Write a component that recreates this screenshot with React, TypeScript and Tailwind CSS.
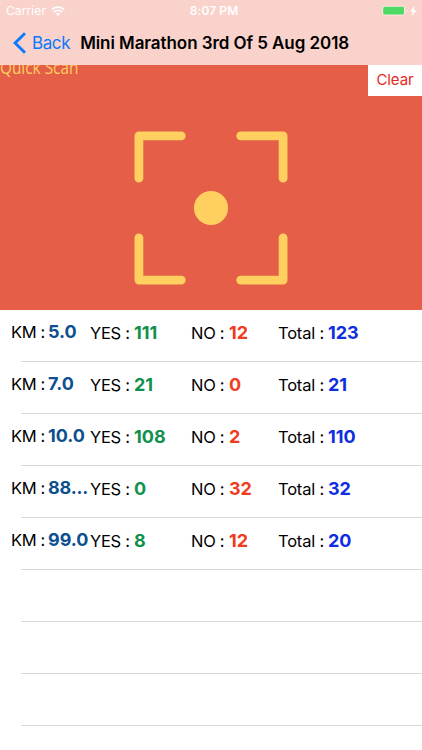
import { clsx } from "clsx";

interface Split {
  km: string;
  yes: number;
  no: number;
  total: number;
}

const SPLITS: Split[] = [
  { km: "5.0", yes: 111, no: 12, total: 123 },
  { km: "7.0", yes: 21, no: 0, total: 21 },
  { km: "10.0", yes: 108, no: 2, total: 110 },
  { km: "88...", yes: 0, no: 32, total: 32 },
  { km: "99.0", yes: 8, no: 12, total: 20 },
];

// The table keeps drawing separators below the last split
const EMPTY_ROWS = 3;

function WifiIcon() {
  return (
    <svg width="14" height="10" viewBox="0 0 14 10" fill="none" stroke="white">
      <path d="M0.8 3.7a8.8 8.8 0 0 1 12.4 0" strokeWidth="1.9" />
      <path d="M3 6.1a5.7 5.7 0 0 1 8 0" strokeWidth="1.8" />
      <path d="M7 9.9 4.9 7.8a3 3 0 0 1 4.2 0Z" fill="white" stroke="none" />
    </svg>
  );
}

function BatteryIcon() {
  return (
    <svg width="37" height="12" viewBox="0 0 37 12">
      <rect x="0.2" y="0.8" width="22.8" height="9.8" rx="1.8" fill="#fbe9df" />
      <rect x="1.2" y="1.8" width="20.8" height="7.8" rx="1.1" fill="#4cd964" />
      <path d="M24.4 4.3c1.5.5 1.5 2.7 0 3.2Z" fill="#fbe9df" />
      <path d="M32.4 0.8 28.2 6.6h2.7l-1.2 4.6 5-6h-2.9Z" fill="white" />
    </svg>
  );
}

function StatusBar() {
  return (
    <div className="flex h-[21px] items-center justify-between pl-[6px] pr-[3px] text-[12px] text-white">
      <div className="flex w-[130px] items-center gap-[5px]">
        <span className="tracking-[0.1px]">Carrier</span>
        <WifiIcon />
      </div>
      <span className="pl-[3px] font-semibold tracking-[0.1px]">8:07 PM</span>
      <div className="flex w-[130px] justify-end">
        <BatteryIcon />
      </div>
    </div>
  );
}

function NavBar() {
  return (
    <div className="flex h-[44px] items-center pl-[13px]">
      <button type="button" className="flex items-center gap-[6px] text-[#0b79fc]">
        <svg width="13" height="22" viewBox="0 0 13 22" fill="none">
          <path d="M12 1.2 2.1 11 12 20.8" stroke="currentColor" strokeWidth="2.9" />
        </svg>
        <span className="pt-[2px] text-[17px] tracking-[-0.4px]">Back</span>
      </button>
      <h1 className="ml-[10px] whitespace-nowrap pt-[2px] text-[17px] font-semibold tracking-[-0.07px] text-black">
        Mini Marathon 3rd Of 5 Aug 2018
      </h1>
    </div>
  );
}

function ScanPanel() {
  return (
    <div className="relative flex h-[245px] justify-center overflow-hidden bg-[#e55e47] pt-[65px]">
      <span className="absolute -top-[10px] left-0 origin-left scale-x-[0.83] whitespace-nowrap font-['Open_Sans',sans-serif] text-[18.5px] font-medium leading-[24px] text-[#ffcf60]">
        Quick Scan
      </span>
      <button
        type="button"
        className="absolute right-0 top-0 h-[31px] w-[54px] bg-white text-[15px] tracking-[-0.1px] text-[#e8281c]"
      >
        Clear
      </button>
      <svg width="154" height="155" viewBox="0 0 154 155" fill="none">
        <g stroke="#ffcf60" strokeWidth="8.8" strokeLinecap="round" strokeLinejoin="round">
          <path d="M4.9 48.2V5.8H47.3" />
          <path d="M106.7 5.8H149.1V48.2" />
          <path d="M149.1 107.8V150.1H106.7" />
          <path d="M47.3 150.1H4.9V107.8" />
        </g>
        <circle cx="77" cy="78" r="17.1" fill="#ffcf60" />
      </svg>
    </div>
  );
}

function Cell({
  label,
  value,
  className,
  labelClass,
  valueClass,
}: {
  label: string;
  value: string | number;
  className: string;
  labelClass: string;
  valueClass: string;
}) {
  return (
    <div className={clsx("flex shrink-0 items-baseline whitespace-nowrap", className)}>
      <span className={clsx("shrink-0 text-[16.5px] text-black", labelClass)}>{label} :</span>
      <span className={clsx("text-[18px] font-bold", valueClass)}>{value}</span>
    </div>
  );
}

function SplitRow({ split }: { split: Split }) {
  return (
    <li className="flex h-[52px] flex-col">
      <div className="flex flex-1 items-center pb-[7px] pl-[11px]">
        <Cell
          label="KM"
          value={split.km}
          className="-mt-px w-[79px]"
          labelClass="w-[37px] tracking-[-0.4px]"
          valueClass={clsx("text-[#0d4f8f]", split.km.endsWith("...") && "tracking-[-0.2px]")}
        />
        <Cell
          label="YES"
          value={split.yes}
          className="mt-px w-[101px]"
          labelClass="w-[44px] tracking-[-0.3px]"
          valueClass="text-[#10914c]"
        />
        <Cell
          label="NO"
          value={split.no}
          className="w-[87px]"
          labelClass="w-[38px] tracking-[-0.3px]"
          valueClass="text-[#f03c1e]"
        />
        <Cell
          label="Total"
          value={split.total}
          className="mt-px"
          labelClass="w-[50px] tracking-[-0.2px]"
          valueClass="text-[#0f2ee0]"
        />
      </div>
      <div className="ml-[21px] h-px bg-[#d8d8dc]" />
    </li>
  );
}

export default function App() {
  return (
    <div className="h-[750px] w-[422px] overflow-hidden bg-white font-[Inter,sans-serif]">
      <header className="bg-[#f9d2cb]">
        <StatusBar />
        <NavBar />
      </header>
      <ScanPanel />
      <ul>
        {SPLITS.map((split) => (
          <SplitRow key={split.km} split={split} />
        ))}
        {Array.from({ length: EMPTY_ROWS }).map((_, i) => (
          <li key={i} className="flex h-[52px] flex-col justify-end">
            <div className="ml-[21px] h-px bg-[#d8d8dc]" />
          </li>
        ))}
      </ul>
    </div>
  );
}
